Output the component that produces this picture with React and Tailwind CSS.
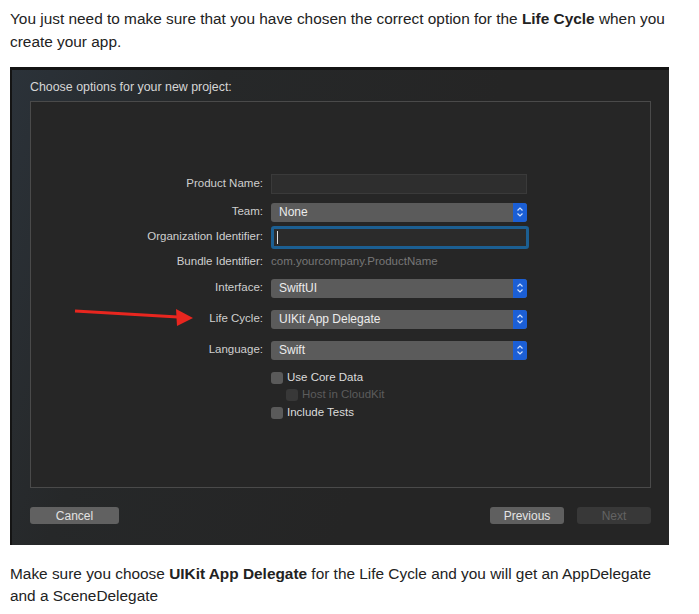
import React from 'react';

const Stepper = () => (
    <div className="w-[14px] h-full bg-[#1b5fd6] rounded-r-[3px] flex items-center justify-center">
        <svg width="8" height="12" viewBox="0 0 8 12" fill="none" stroke="#cfe0ff" strokeWidth="1.2">
            <path d="M1.5 4.5 L4 2 L6.5 4.5" />
            <path d="M1.5 7.5 L4 10 L6.5 7.5" />
        </svg>
    </div>
);

const Row = ({ label, mt, children }) => (
    <div className={`flex items-center h-[20px] ${mt}`}>
        <div className="w-[240px] text-right text-[11.5px] text-[#cfcfcf] pr-[8px]">{label}</div>
        {children}
    </div>
);

const Select = ({ value }) => (
    <div className="w-[256px] h-[19px] bg-[#5b5b5b] rounded-[3px] flex items-center justify-between">
        <span className="pl-[8px] text-[12px] text-[#ececec]">{value}</span>
        <Stepper />
    </div>
);

const Check = ({ label, disabled, indent, mt }) => (
    <div className={`flex items-center h-[16px] ${mt} ${indent ? 'pl-[255px]' : 'pl-[240px]'}`}>
        <div className={`w-[12px] h-[12px] rounded-[3px] ${disabled ? 'bg-[#383838]' : 'bg-[#5a5a5a]'}`}></div>
        <span className={`ml-[4px] text-[11.5px] ${disabled ? 'text-[#5c5c5c]' : 'text-[#dcdcdc]'}`}>{label}</span>
    </div>
);

const App = () => {
    return (
        <div className="relative w-[699px] h-[614px] bg-white font-['Liberation_Sans',Arial,sans-serif] text-[#222]">
            <p className="w-[679px] px-[10px] pt-[7px] text-[15.4px] leading-[23px]">
                You just need to make sure that you have chosen the correct option for the <b>Life Cycle</b> when you create your app.
            </p>

            <div className="mt-[14px] ml-[10px] w-[659px] h-[478px] border-t-[3px] border-l-[2px] border-[#141414] bg-[linear-gradient(110deg,#2b3239_0%,#262829_25%,#252525_60%)] flex flex-col">
                <div className="pl-[18px] pt-[8px] h-[31px] text-[12.4px] text-[#d6d6d6]">Choose options for your new project:</div>

                <div className="ml-[18px] w-[621px] h-[387px] border border-[#4a4a4a] bg-[#262626] pt-[72px]">
                    <Row label="Product Name:" mt="mt-0">
                        <div className="w-[256px] h-[20px] bg-[#2e2e2e] border border-[#3a3a3a]"></div>
                    </Row>
                    <Row label="Team:" mt="mt-[8px]">
                        <Select value="None" />
                    </Row>
                    <Row label="Organization Identifier:" mt="mt-[5px]">
                        <div className="w-[258px] h-[23px] border-[3px] border-[#1c5f92] rounded-[3px] bg-[#2b2b2b] flex items-center pl-[3px]">
                            <div className="w-[1px] h-[13px] bg-[#e0e0e0]"></div>
                        </div>
                    </Row>
                    <Row label="Bundle Identifier:" mt="mt-[5px]">
                        <span className="text-[11.5px] text-[#777]">com.yourcompany.ProductName</span>
                    </Row>
                    <Row label="Interface:" mt="mt-[6px]">
                        <Select value="SwiftUI" />
                    </Row>
                    <Row label="Life Cycle:" mt="mt-[11px]">
                        <Select value="UIKit App Delegate" />
                    </Row>
                    <Row label="Language:" mt="mt-[11px]">
                        <Select value="Swift" />
                    </Row>
                    <Check label="Use Core Data" mt="mt-[10px]" />
                    <Check label="Host in CloudKit" disabled indent mt="mt-[1px]" />
                    <Check label="Include Tests" mt="mt-[2px]" />
                </div>

                <div className="flex items-center justify-between pl-[18px] pr-[18px] mt-[19px]">
                    <button className="w-[89px] h-[17px] rounded-[3px] bg-[#616161] text-[12px] text-[#e2e2e2]">Cancel</button>
                    <div className="flex gap-[13px]">
                        <button className="w-[74px] h-[17px] rounded-[3px] bg-[#5f5f5f] text-[12px] text-[#e4e4e4]">Previous</button>
                        <button className="w-[74px] h-[17px] rounded-[3px] bg-[#383838] text-[12px] text-[#636363]">Next</button>
                    </div>
                </div>
            </div>

            <p className="w-[679px] px-[10px] mt-[18px] text-[15.4px] leading-[22px]">
                Make sure you choose <b>UIKit App Delegate</b> for the Life Cycle and you will get an AppDelegate and a SceneDelegate
            </p>

            <svg className="absolute left-0 top-0" width="699" height="614" pointerEvents="none">
                <line x1="75" y1="311" x2="178" y2="317" stroke="#e8261f" strokeWidth="3" />
                <polygon points="193,318 176,309 177,326" fill="#e8261f" />
            </svg>
        </div>
    );
};

export default App;
